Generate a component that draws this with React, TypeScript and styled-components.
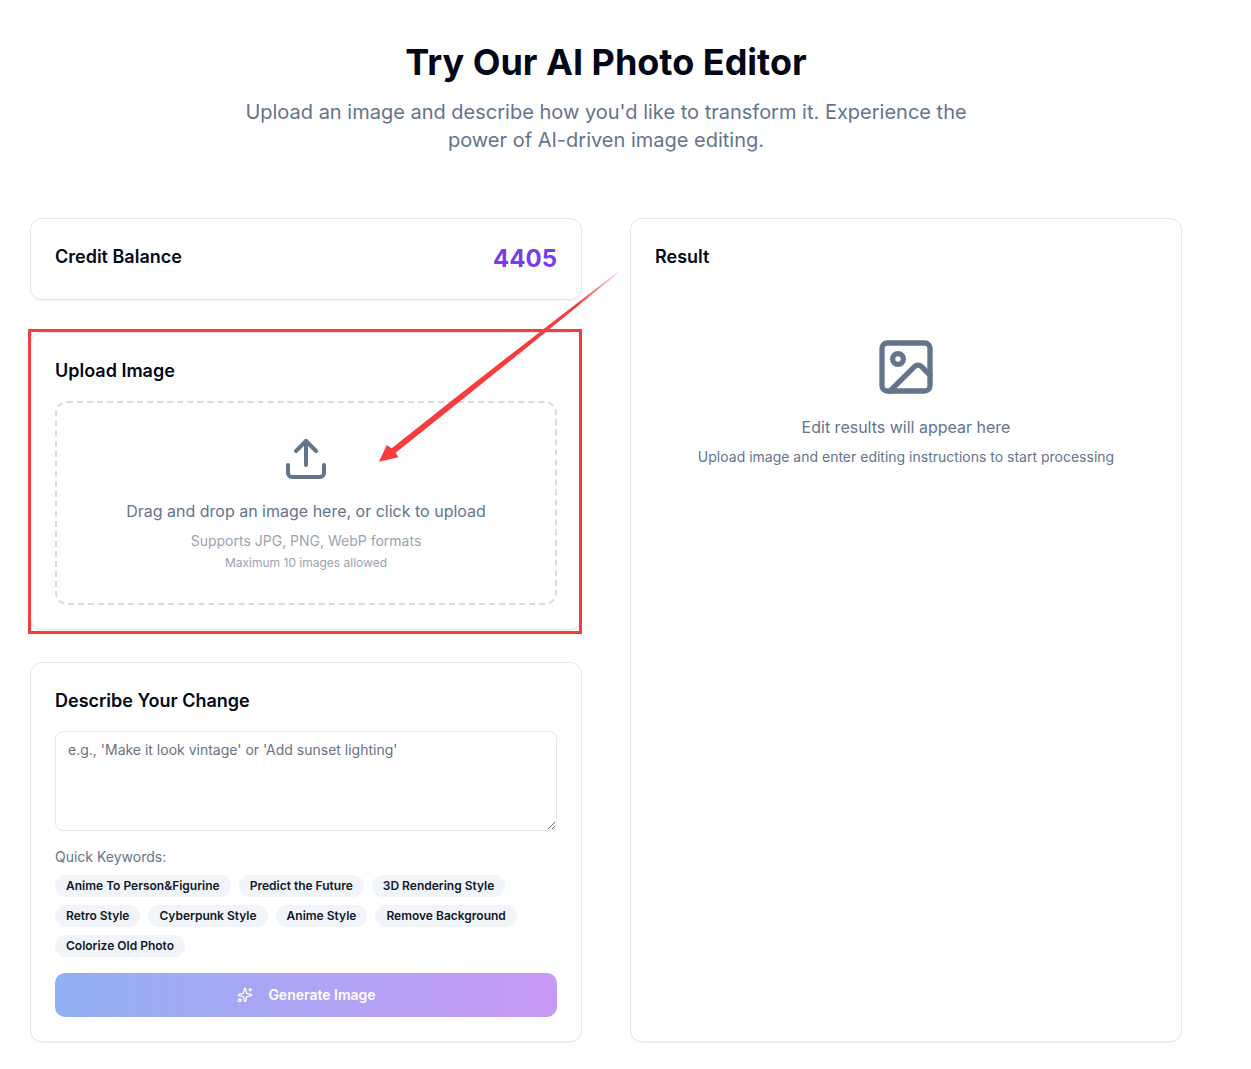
import styled, { createGlobalStyle } from 'styled-components';
import { Image as ImageIcon, Sparkles, Upload } from 'lucide-react';

const keywords = [
  'Anime To Person&Figurine',
  'Predict the Future',
  '3D Rendering Style',
  'Retro Style',
  'Cyberpunk Style',
  'Anime Style',
  'Remove Background',
  'Colorize Old Photo',
];

function App() {
  return (
    <>
      <GlobalStyle />
      <Page>
        <Header>
          <Title>Try Our AI Photo Editor</Title>
          <Subtitle>
            Upload an image and describe how you'd like to transform it. Experience the power of AI-driven image
            editing.
          </Subtitle>
        </Header>

        <Columns>
          <LeftColumn>
            <BalanceCard>
              <CardTitle>Credit Balance</CardTitle>
              <Balance>4405</Balance>
            </BalanceCard>

            <Card>
              <UploadTitle>Upload Image</UploadTitle>
              <DropZone>
                <Upload size={48} color="#64748b" strokeWidth={2} />
                <DropText>Drag and drop an image here, or click to upload</DropText>
                <DropHint>Supports JPG, PNG, WebP formats</DropHint>
                <DropLimit>Maximum 10 images allowed</DropLimit>
              </DropZone>
            </Card>

            <Card>
              <UploadTitle>Describe Your Change</UploadTitle>
              <Prompt placeholder="e.g., 'Make it look vintage' or 'Add sunset lighting'" />
              <KeywordsLabel>Quick Keywords:</KeywordsLabel>
              <Chips>
                {keywords.map((keyword) => (
                  <Chip key={keyword}>{keyword}</Chip>
                ))}
              </Chips>
              <GenerateButton type="button">
                <Sparkles size={16} strokeWidth={2} />
                Generate Image
              </GenerateButton>
            </Card>
          </LeftColumn>

          <Card>
            <CardTitle>Result</CardTitle>
            <EmptyResult>
              <ImageIcon size={64} color="#64748b" strokeWidth={2} />
              <EmptyTitle>Edit results will appear here</EmptyTitle>
              <EmptyHint>Upload image and enter editing instructions to start processing</EmptyHint>
            </EmptyResult>
          </Card>
        </Columns>

        <HighlightBox />
        <ArrowMark viewBox="370 260 260 210">
          <defs>
            <linearGradient id="arrowFade" gradientUnits="userSpaceOnUse" x1="618" y1="272" x2="578" y2="305">
              <stop offset="0" stopColor="#f63c3c" stopOpacity="0.25" />
              <stop offset="1" stopColor="#f63c3c" />
            </linearGradient>
          </defs>
          <path
            d="M618 272.9 Q507.6 363.9 395.7 452.7 L398.3 457.3 L379 461.7 L386.7 445 L391.7 448.3 Q503.6 359.2 617.4 272.2 Z"
            fill="url(#arrowFade)"
          />
        </ArrowMark>
      </Page>
    </>
  );
}

export default App;

const GlobalStyle = createGlobalStyle`
  * {
    box-sizing: border-box;
  }

  body {
    margin: 0;
    background: #ffffff;
    font-family: Inter, "Liberation Sans", sans-serif;
    color: #020817;
  }
`;

const Page = styled.main`
  position: relative;
  width: 1212px;
  min-height: 1069px;
  padding: 42px 30px 27px;
`;

const Header = styled.header`
  display: flex;
  flex-direction: column;
  align-items: center;
  margin-bottom: 64px;
  text-align: center;
`;

const Title = styled.h1`
  margin: 0 0 16px;
  font-size: 36px;
  font-weight: 700;
  line-height: 40px;
`;

const Subtitle = styled.p`
  width: 768px;
  margin: 0;
  font-size: 20px;
  line-height: 28px;
  color: #64748b;
`;

const Columns = styled.div`
  display: grid;
  grid-template-columns: 1fr 1fr;
  gap: 48px;
`;

const LeftColumn = styled.div`
  display: flex;
  flex-direction: column;
  gap: 32px;
`;

const Card = styled.section`
  padding: 24px;
  background: #ffffff;
  border: 1px solid #e2e8f0;
  border-radius: 12px;
  box-shadow: 0 1px 2px rgba(0, 0, 0, 0.05);
`;

const BalanceCard = styled(Card)`
  display: flex;
  justify-content: space-between;
  align-items: flex-start;
`;

const CardTitle = styled.h2`
  margin: 0;
  font-size: 18px;
  font-weight: 600;
  line-height: 28px;
`;

const UploadTitle = styled(CardTitle)`
  margin-bottom: 16px;
`;

const Balance = styled.span`
  font-size: 24px;
  font-weight: 700;
  line-height: 32px;
  color: #7c3aed;
`;

const DropZone = styled.div`
  display: flex;
  flex-direction: column;
  align-items: center;
  padding: 32px;
  border: 2px dashed #d8dbe3;
  border-radius: 12px;
  text-align: center;
`;

const DropText = styled.p`
  margin: 16px 0 0;
  font-size: 16px;
  line-height: 24px;
  color: #64748b;
`;

const DropHint = styled.p`
  margin: 8px 0 0;
  font-size: 14px;
  line-height: 20px;
  color: #9ca3af;
`;

const DropLimit = styled.p`
  margin: 4px 0 0;
  font-size: 12px;
  line-height: 16px;
  color: #9ca3af;
`;

const Prompt = styled.textarea`
  display: block;
  width: 100%;
  height: 100px;
  margin-bottom: 16px;
  padding: 8px 12px;
  border: 1px solid #e2e8f0;
  border-radius: 8px;
  outline: none;
  font-family: inherit;
  font-size: 14px;
  line-height: 20px;

  &::placeholder {
    color: #6b7280;
    opacity: 1;
  }
`;

const KeywordsLabel = styled.p`
  margin: 0 0 8px;
  font-size: 14px;
  line-height: 20px;
  color: #64748b;
`;

const Chips = styled.div`
  display: flex;
  flex-wrap: wrap;
  gap: 8px;
`;

const Chip = styled.span`
  padding: 2px 10px;
  background: #f1f5f9;
  border: 1px solid transparent;
  border-radius: 999px;
  font-size: 12px;
  font-weight: 600;
  line-height: 16px;
  color: #0f172a;
`;

const GenerateButton = styled.button`
  display: flex;
  justify-content: center;
  align-items: center;
  gap: 15px;
  width: 100%;
  height: 44px;
  margin-top: 16px;
  padding: 0 0 1px 1px;
  background: linear-gradient(to right, #2563eb, #9333ea);
  border: none;
  border-radius: 10px;
  opacity: 0.5;
  font-family: inherit;
  font-size: 14px;
  font-weight: 600;
  line-height: 20px;
  color: #ffffff;
`;

const EmptyResult = styled.div`
  display: flex;
  flex-direction: column;
  align-items: center;
  padding-top: 64px;
  text-align: center;
`;

const EmptyTitle = styled.p`
  margin: 16px 0 0;
  font-size: 16px;
  line-height: 24px;
  color: #64748b;
`;

const EmptyHint = styled.p`
  margin: 8px 0 0;
  font-size: 14px;
  line-height: 20px;
  color: #64748b;
`;

const HighlightBox = styled.div`
  position: absolute;
  left: 28px;
  top: 329px;
  width: 554px;
  height: 305px;
  border: 3px solid #f63c3c;
  pointer-events: none;
`;

const ArrowMark = styled.svg`
  position: absolute;
  left: 370px;
  top: 260px;
  width: 260px;
  height: 210px;
  pointer-events: none;
`;
